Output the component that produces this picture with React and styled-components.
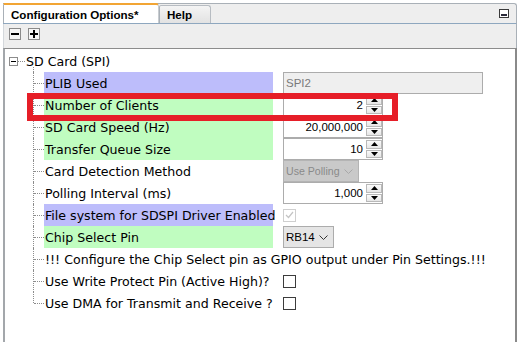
import React from "react";
import styled, { createGlobalStyle } from "styled-components";

const Global = createGlobalStyle`
  html, body { margin: 0; padding: 0; background: #ffffff; }
  body { font-family: "DejaVu Sans", Verdana, sans-serif; font-size: 12.6px; color: #000; }
`;

const Panel = styled.div`
  position: relative;
  margin: 3px 0 0 3px;
  width: 514px;
  height: 339px;
  display: flex;
  flex-direction: column;
`;

const TabStrip = styled.div`
  height: 19px;
  display: flex;
  align-items: stretch;
  background: #eeeeee;
  border-top: 1px solid #a9b0b7;
  border-right: 1px solid #a9b0b7;
  border-top-right-radius: 3px;
  border-bottom: 1px solid #8ea7bf;
`;

const Tab = styled.div`
  box-sizing: border-box;
  display: flex;
  align-items: center;
  white-space: nowrap;
  font-family: "Liberation Sans", Arial, sans-serif;
  font-weight: bold;
  font-size: 11.6px;
  color: #000;
  padding: 0 0 0 7px;
  width: ${p => p.$w}px;
  margin-top: ${p => (p.$active ? "-1px" : "1px")};
  background: ${p => (p.$active ? "#ffffff" : "linear-gradient(#f4f4f4, #e2e2e2)")};
  border-top: ${p => (p.$active ? "2px solid #f2a534" : "1px solid #b7bcc2")};
  border-left: 1px solid #a9b0b7;
  border-right: 1px solid ${p => (p.$active ? "#c8ccd0" : "#b7bcc2")};
  border-top-right-radius: 3px;
  border-top-left-radius: ${p => (p.$active ? "0" : "2px")};
`;

const TabSpacer = styled.div`
  flex: 1;
  display: flex;
  align-items: center;
  justify-content: flex-end;
  padding-right: 7px;
`;

const Toolbar = styled.div`
  height: 24px;
  box-sizing: border-box;
  background: #eeeeee;
  display: flex;
  align-items: flex-start;
  gap: 7px;
  padding: 4px 0 0 5px;
  border-left: 1px solid #d4d8dc;
  border-right: 1px solid #a9b0b7;
`;

const ToolButton = styled.div`
  width: 12px;
  height: 12px;
  box-sizing: border-box;
  border: 1px solid #8a8a8a;
  background: #f6f6f6;
  display: flex;
  align-items: center;
  justify-content: center;
`;

const Content = styled.div`
  flex: 1;
  background: #ffffff;
  border-top: 1px solid #8c8c8c;
  border-left: 2px solid #a3a7ab;
  border-right: 2px solid #8a8a8a;
  padding-top: 2px;
`;

const RootRow = styled.div`
  position: relative;
  height: 21px;
  display: flex;
  align-items: center;
  padding-left: 4px;
  &::after {
    content: "";
    position: absolute;
    left: 28px;
    top: 16px;
    height: 5px;
    border-left: 1px dotted #8c8c8c;
  }
`;

const Expander = styled.div`
  width: 9px;
  height: 9px;
  box-sizing: border-box;
  border: 1px solid #8c8c8c;
  display: flex;
  align-items: center;
  justify-content: center;
  background: #fff;
`;

const RootDots = styled.div`
  width: 7px;
  margin: 0 1px 0 0;
  border-top: 1px dotted #8c8c8c;
`;

const Row = styled.div`
  height: 22px;
  display: grid;
  grid-template-columns: 39px 229px 10px 1fr;
  align-items: stretch;
`;

const Indent = styled.div`
  position: relative;
  &::before {
    content: "";
    position: absolute;
    left: 28px;
    top: 0;
    height: ${p => (p.$last ? "11px" : "22px")};
    border-left: 1px dotted #8c8c8c;
  }
  &::after {
    content: "";
    position: absolute;
    left: 29px;
    top: 11px;
    width: 10px;
    border-top: 1px dotted #8c8c8c;
  }
`;

const Label = styled.div`
  display: flex;
  align-items: center;
  white-space: nowrap;
  padding-left: 1px;
  grid-column: ${p => (p.$wide ? "2 / 5" : "2")};
  background: ${p =>
    p.$tone === "purple" ? "#bdbdfb" : p.$tone === "green" ? "#c0fdc0" : "transparent"};
`;

const ValueCell = styled.div`
  grid-column: 4;
  display: flex;
  align-items: center;
  font-family: "Liberation Sans", Arial, sans-serif;
  font-size: 11.5px;
`;

const ReadOnlyField = styled.div`
  box-sizing: border-box;
  width: 200px;
  height: 22px;
  border: 1px solid #acacac;
  background: #efefef;
  color: #7a7a7a;
  display: flex;
  align-items: center;
  padding-left: 2px;
`;

const SpinBox = styled.div`
  box-sizing: border-box;
  width: 100px;
  height: 22px;
  border: 1px solid #acacac;
  background: #fff;
  display: flex;
  align-items: stretch;
`;

const SpinText = styled.div`
  flex: 1;
  padding-right: 3px;
  display: flex;
  align-items: center;
  justify-content: flex-end;
`;

const SpinButtons = styled.div`
  width: 16px;
  display: flex;
  flex-direction: column;
  padding: 1px 0;
  gap: 1px;
`;

const SpinButton = styled.div`
  flex: 1;
  box-sizing: border-box;
  border: 1px solid #b9b9b9;
  background: linear-gradient(#fbfbfb, #e6e6e6);
  display: flex;
  align-items: center;
  justify-content: center;
`;

const Combo = styled.div`
  box-sizing: border-box;
  width: ${p => p.$w}px;
  height: 22px;
  white-space: nowrap;
  border: 1px solid ${p => (p.$disabled ? "#b4b4b4" : "#acacac")};
  background: ${p => (p.$disabled ? "#c9c9c9" : "#e5e5e5")};
  color: ${p => (p.$disabled ? "#8a8a8a" : "#000")};
  font-size: ${p => (p.$disabled ? "10.6px" : "11.5px")};
  display: flex;
  align-items: center;
  justify-content: space-between;
  padding: 0 5px 0 2px;
`;

const Check = styled.div`
  box-sizing: border-box;
  width: 13px;
  height: 13px;
  border: 1px solid ${p => (p.$disabled ? "#cfcfcf" : "#3c3c3c")};
  background: #fff;
  display: flex;
  align-items: center;
  justify-content: center;
`;

const Annotation = styled.div`
  position: absolute;
  left: 24px;
  top: 90px;
  width: 371px;
  height: 28px;
  box-sizing: border-box;
  border: 6px solid #e61e28;
  pointer-events: none;
`;

const Up = () => (
  <svg width="7" height="4" viewBox="0 0 7 4"><polygon points="0,4 7,4 3.5,0" fill="#000" /></svg>
);
const Down = () => (
  <svg width="7" height="4" viewBox="0 0 7 4"><polygon points="0,0 7,0 3.5,4" fill="#000" /></svg>
);
const Chevron = ({ color }) => (
  <svg width="9" height="5" viewBox="0 0 9 5"><polyline points="0.5,0.5 4.5,4.5 8.5,0.5" fill="none" stroke={color} strokeWidth="1" /></svg>
);

const Spinner = ({ value }) => (
  <SpinBox>
    <SpinText>{value}</SpinText>
    <SpinButtons>
      <SpinButton><Up /></SpinButton>
      <SpinButton><Down /></SpinButton>
    </SpinButtons>
  </SpinBox>
);

const rows = [
  { label: "PLIB Used", tone: "purple", value: <ReadOnlyField>SPI2</ReadOnlyField> },
  { label: "Number of Clients", tone: "green", value: <Spinner value="2" /> },
  { label: "SD Card Speed (Hz)", tone: "green", value: <Spinner value="20,000,000" /> },
  { label: "Transfer Queue Size", tone: "green", value: <Spinner value="10" /> },
  {
    label: "Card Detection Method",
    value: (
      <Combo $w={76} $disabled>
        Use Polling <Chevron color="#a8a8a8" />
      </Combo>
    ),
  },
  { label: "Polling Interval (ms)", value: <Spinner value="1,000" /> },
  {
    label: "File system for SDSPI Driver Enabled",
    tone: "purple",
    value: (
      <Check $disabled>
        <svg width="9" height="8" viewBox="0 0 9 8"><polyline points="1,4 3.5,6.5 8,1" fill="none" stroke="#c4c4c4" strokeWidth="1.2" /></svg>
      </Check>
    ),
  },
  {
    label: "Chip Select Pin",
    tone: "green",
    value: (
      <Combo $w={51}>
        RB14 <Chevron color="#333" />
      </Combo>
    ),
  },
  { label: "!!! Configure the Chip Select pin as GPIO output under Pin Settings.!!!", wide: true },
  { label: "Use Write Protect Pin (Active High)?", value: <Check /> },
  { label: "Use DMA for Transmit and Receive ?", value: <Check /> },
];

export default function App() {
  return (
    <>
      <Global />
      <Panel>
        <TabStrip>
          <Tab $active $w={156}>Configuration Options*</Tab>
          <Tab $w={52}>Help</Tab>
          <TabSpacer>
            <svg width="10" height="9" viewBox="0 0 10 9">
              <rect x="0.5" y="0.5" width="9" height="8" fill="#fff" stroke="#3a3a3a" />
              <rect x="2" y="5" width="6" height="2" fill="#2a2a3a" />
            </svg>
          </TabSpacer>
        </TabStrip>
        <Toolbar>
          <ToolButton>
            <svg width="8" height="8" viewBox="0 0 8 8"><rect x="0" y="3" width="8" height="2" fill="#000" /></svg>
          </ToolButton>
          <ToolButton>
            <svg width="8" height="8" viewBox="0 0 8 8"><rect x="0" y="3" width="8" height="2" fill="#000" /><rect x="3" y="0" width="2" height="8" fill="#000" /></svg>
          </ToolButton>
        </Toolbar>
        <Content>
          <RootRow>
            <Expander>
              <svg width="5" height="1" viewBox="0 0 5 1"><rect width="5" height="1" fill="#000" /></svg>
            </Expander>
            <RootDots />
            SD Card (SPI)
          </RootRow>
          {rows.map((r, i) => (
            <Row key={r.label}>
              <Indent $last={i === rows.length - 1} />
              <Label $tone={r.tone} $wide={r.wide}>{r.label}</Label>
              {r.value && <ValueCell>{r.value}</ValueCell>}
            </Row>
          ))}
        </Content>
        <Annotation />
      </Panel>
    </>
  );
}
